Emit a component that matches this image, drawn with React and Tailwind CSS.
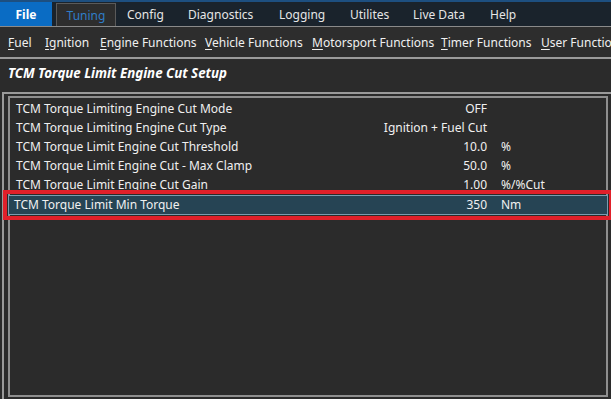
import React from 'react';

const tabs = [
    { label: 'Config', w: 'w-[61px]' },
    { label: 'Diagnostics', w: 'w-[91px]' },
    { label: 'Logging', w: 'w-[71px]' },
    { label: 'Utilites', w: 'w-[63px]' },
    { label: 'Live Data', w: 'w-[77px]' },
    { label: 'Help', w: 'w-[60px]' },
];

const menu = [
    { first: 'F', rest: 'uel', w: 'w-[37px]' },
    { first: 'I', rest: 'gnition', w: 'w-[55px]' },
    { first: 'E', rest: 'ngine Functions', w: 'w-[105px]' },
    { first: 'V', rest: 'ehicle Functions', w: 'w-[107px]' },
    { first: 'M', rest: 'otorsport Functions', w: 'w-[129px]' },
    { first: 'T', rest: 'imer Functions', w: 'w-[100px]' },
    { first: 'U', rest: 'ser Functions', w: 'w-[100px]' },
];

const rows = [
    { name: 'TCM Torque Limiting Engine Cut Mode', value: 'OFF', unit: '' },
    { name: 'TCM Torque Limiting Engine Cut Type', value: 'Ignition + Fuel Cut', unit: '' },
    { name: 'TCM Torque Limit Engine Cut Threshold', value: '10.0', unit: '%' },
    { name: 'TCM Torque Limit Engine Cut - Max Clamp', value: '50.0', unit: '%' },
    { name: 'TCM Torque Limit Engine Cut Gain', value: '1.00', unit: '%/%Cut' },
];

export default function App() {
    return (
        <div className="w-[611px] h-[399px] overflow-hidden bg-[#2b2b2b] text-[12px] text-[#f0f0f0] flex flex-col" style={{ fontFamily: '"Noto Sans", "Open Sans", sans-serif' }}>
            {/* Tab strip */}
            <div className="h-[27px] shrink-0 bg-[#1a232c] border-t-2 border-[#1d4f80] border-b border-b-[#8a8a8a] flex items-end">
                <div className="w-[52px] h-[24px] bg-[#0a6cc4] flex items-center justify-center pt-[1px] font-bold text-white text-[12px]">File</div>
                <div className="ml-[4px] w-[60px] h-[23px] bg-[#2d2d2d] border border-b-0 border-[#5a5a5a] flex items-center justify-center pt-[1px] text-[#2f7dc8]">Tuning</div>
                <div className="flex items-center h-[24px] pt-[2px] pl-[11px]">
                    {tabs.map(t => (
                        <div key={t.label} className={`${t.w} shrink-0 text-[#e6e6e6]`}>{t.label}</div>
                    ))}
                </div>
            </div>

            {/* Function menu */}
            <div className="h-[32px] shrink-0 bg-[#2d2d2d] border-b-2 border-[#9a9a9a] flex items-center pt-[1px] pl-[8px] whitespace-nowrap">
                {menu.map(m => (
                    <div key={m.rest} className={`${m.w} shrink-0`}>
                        <span className="underline underline-offset-2">{m.first}</span>{m.rest}
                    </div>
                ))}
            </div>

            {/* Page title */}
            <div className="h-[33px] shrink-0 flex items-center pb-[3px] pl-[8px] font-bold italic text-[13.3px] text-white">
                TCM Torque Limit Engine Cut Setup
            </div>

            {/* Outer frame */}
            <div className="flex-1 border-t-2 border-l-2 border-[#9a9a9a] ml-[2px] pl-[4px] pt-[2px] pb-[2px] pr-[3px] flex">
                <div className="flex-1 border-2 border-[#8f8f8f] flex flex-col pt-[1px]">
                    {rows.map(r => (
                        <div key={r.name} className="h-[19px] flex items-center pl-[6px]">
                            <div className="flex-1">{r.name}</div>
                            <div className="w-[200px] text-right">{r.value}</div>
                            <div className="w-[119px] pl-[14px]">{r.unit}</div>
                        </div>
                    ))}
                    <div className="-mx-[7px] -mt-[4px] border-4 border-[#e0202a] p-[1px]">
                        <div className="h-[20px] bg-[#264454] border border-[#7a9cb0] flex items-center pl-[5px]">
                            <div className="flex-1">TCM Torque Limit Min Torque</div>
                            <div className="w-[200px] text-right">350</div>
                            <div className="w-[120px] pl-[14px]">Nm</div>
                        </div>
                    </div>
                </div>
            </div>
        </div>
    );
}
